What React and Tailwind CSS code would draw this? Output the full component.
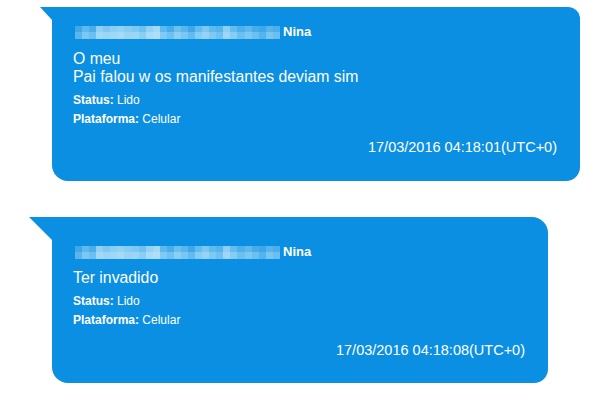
import React from "react";

const topRow = ["#3fa8ea","#5db9ee","#4aaeeb","#8fd0f4","#7cc8f2","#8bcff4","#92d2f5","#86cdf3","#7ec9f2","#6fc1f0","#92d2f5","#a2d9f6","#5db9ee","#48adeb","#6cc0f0","#58b6ed","#3fa8ea","#63bcef","#7dc8f2","#5fbaee","#56b5ed","#8ccff4","#64bdef","#4eb0ec","#5cb8ee","#47acea","#3ca7e9","#57b5ed","#4cafec"];
const botRow = ["#58b6ed","#7cc8f2","#6cc0f0","#a0d8f6","#9ad5f5","#9fd7f6","#a6daf7","#98d4f5","#9cd6f5","#8acef3","#a8dbf7","#b0def8","#82caf3","#6ec1f0","#8ccff4","#7bc7f2","#63bcef","#86cdf3","#94d3f5","#80c9f2","#6ec1f0","#9dd6f6","#86cdf3","#6cc0f0","#7dc8f2","#6cc0f0","#55b4ed","#79c6f1","#6abff0"];

function Blur() {
  return (
    <div className="flex flex-col w-[205px] h-[13px] mr-[3px]">
      <div className="flex h-[6px]">
        {topRow.map((c, i) => (
          <div key={i} className="flex-1" style={{ backgroundColor: c }} />
        ))}
      </div>
      <div className="flex h-[7px]">
        {botRow.map((c, i) => (
          <div key={i} className="flex-1" style={{ backgroundColor: c }} />
        ))}
      </div>
    </div>
  );
}

function NameRow() {
  return (
    <div className="flex items-center h-[14px] pl-[2px]">
      <Blur />
      <span className="text-[13px] font-bold leading-[14px] text-white">Nina</span>
    </div>
  );
}

function Meta() {
  return (
    <div className="text-[12px] leading-[19px] text-white">
      <div><span className="font-bold">Status:</span> Lido</div>
      <div><span className="font-bold">Plataforma:</span> Celular</div>
    </div>
  );
}

export default function App() {
  return (
    <div
      className="w-[600px] h-[400px] bg-white overflow-hidden flex flex-col"
      style={{ fontFamily: '"Liberation Sans", Arial, sans-serif' }}
    >
      <div className="ml-[52px] mt-[7px] relative w-[528px] h-[174px] bg-[#0b8fe2] rounded-tr-[12px] rounded-br-[14px] rounded-bl-[16px] flex flex-col pl-[21px] pr-[23px] pt-[18px]">
        <svg className="absolute left-[-12px] top-0" width="13" height="14" viewBox="0 0 13 14">
          <polygon points="0,0 13,0 13,14" fill="#0b8fe2" />
        </svg>
        <NameRow />
        <div className="mt-[11px] text-[15.8px] leading-[18px] text-white">
          <div>O meu</div>
          <div>Pai falou w os manifestantes deviam sim</div>
        </div>
        <div className="mt-[5px]"><Meta /></div>
        <div className="mt-[9px] text-right text-[14.5px] leading-[18px] text-white">17/03/2016 04:18:01(UTC+0)</div>
      </div>

      <div className="ml-[52px] mt-[36px] relative w-[496px] h-[166px] bg-[#0b8fe2] rounded-tr-[16px] rounded-br-[14px] rounded-bl-[16px] flex flex-col pl-[21px] pr-[23px] pt-[28px]">
        <svg className="absolute left-[-23px] top-0" width="24" height="24" viewBox="0 0 24 24">
          <polygon points="0,0 24,0 24,24" fill="#0b8fe2" />
        </svg>
        <NameRow />
        <div className="mt-[10px] text-[15.8px] leading-[18px] text-white">Ter invadido</div>
        <div className="mt-[5px]"><Meta /></div>
        <div className="mt-[11px] text-right text-[14.5px] leading-[18px] text-white">17/03/2016 04:18:08(UTC+0)</div>
      </div>
    </div>
  );
}
